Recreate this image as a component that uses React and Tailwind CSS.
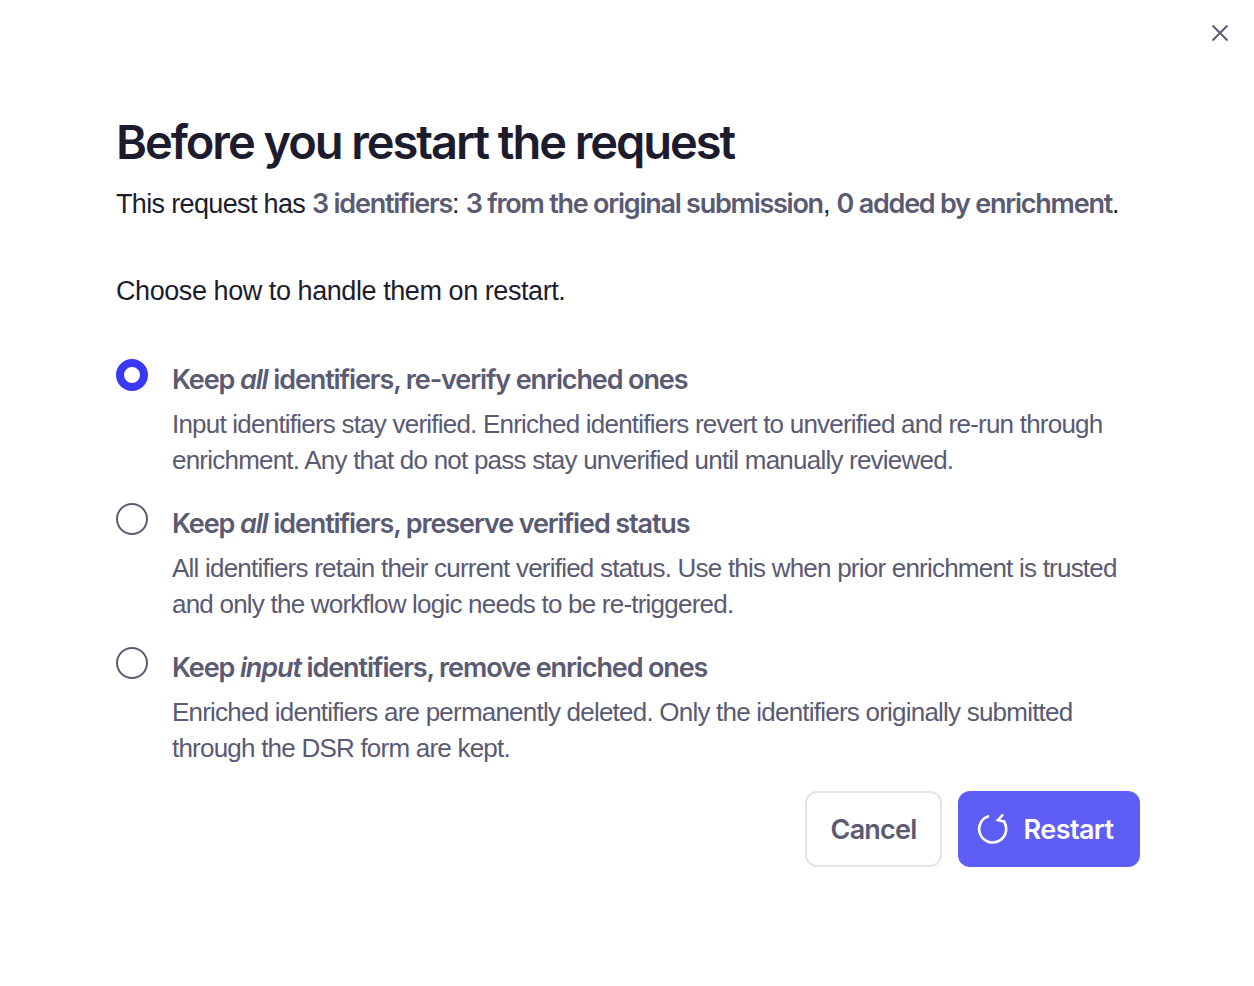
import React, { useState } from 'react'

const options = [
  {
    title: <>Keep <em className="font-semibold">all</em> identifiers, re-verify enriched ones</>,
    lines: ['Input identifiers stay verified. Enriched identifiers revert to unverified and re-run through', 'enrichment. Any that do not pass stay unverified until manually reviewed.'],
  },
  {
    title: <>Keep <em className="font-semibold">all</em> identifiers, preserve verified status</>,
    lines: ['All identifiers retain their current verified status. Use this when prior enrichment is trusted', 'and only the workflow logic needs to be re-triggered.'],
  },
  {
    title: <>Keep <em className="font-semibold">input</em> identifiers, remove enriched ones</>,
    lines: ['Enriched identifiers are permanently deleted. Only the identifiers originally submitted', 'through the DSR form are kept.'],
  },
]

const RadioOption = ({ option, checked, onSelect }) => (
  <div className="flex gap-6 cursor-pointer" onClick={onSelect}>
    <div className={`w-8 h-8 rounded-full shrink-0 ${checked ? 'border-[8px] border-[#3838f5]' : 'border-2 border-[#5a5a72]'}`} />
    <div className="pt-[3px]">
      <p className="font-['Inter',sans-serif] text-[27px] leading-9 font-semibold tracking-[-1.12px] text-[#5a5a72]">{option.title}</p>
      <p className="mt-[8px] text-[26px] leading-9 tracking-[-0.78px] text-[#5a5a72]">
        {option.lines.map(l => <span key={l} className="block whitespace-nowrap">{l}</span>)}
      </p>
    </div>
  </div>
)

export default function App() {
  const [selected, setSelected] = useState(0)

  return (
    <div className="relative h-[986px] bg-white font-['Liberation_Sans',sans-serif] overflow-hidden">
      <button className="absolute top-[23px] right-[24px] text-[#5a5a72]">
        <svg width="20" height="20" viewBox="0 0 20 20" fill="none" stroke="currentColor" strokeWidth="2">
          <path d="M2.5 2.5l15 15M17.5 2.5l-15 15" />
        </svg>
      </button>

      <div className="pl-[116px] pr-[114px] pt-[112px]">
        <h1 className="font-['Inter',sans-serif] text-[47px] leading-[60px] font-semibold tracking-[-2.05px] text-[#1c1c2e] whitespace-nowrap">Before you restart the request</h1>
        <p className="mt-[14px] text-[27px] leading-9 tracking-[-0.65px] text-[#1c1c2e] whitespace-nowrap">
          This request has <span className="font-['Inter',sans-serif] font-semibold tracking-[-1.25px] text-[#5a5a72]">3 identifiers</span>: <span className="font-['Inter',sans-serif] font-semibold tracking-[-1.25px] text-[#5a5a72]">3 from the original submission</span>, <span className="font-['Inter',sans-serif] font-semibold tracking-[-1.25px] text-[#5a5a72]">0 added by enrichment</span>.
        </p>
        <p className="mt-[51px] text-[27px] leading-9 tracking-[-0.43px] text-[#1c1c2e]">Choose how to handle them on restart.</p>

        <div className="mt-[50px] flex flex-col gap-[25px]">
          {options.map((o, i) => (
            <RadioOption key={i} option={o} checked={selected === i} onSelect={() => setSelected(i)} />
          ))}
        </div>

        <div className="mt-[25px] flex justify-end gap-4">
          <button className="h-[76px] w-[137px] rounded-xl border-2 border-[#e4e4ea] bg-white pt-[2px] font-['Inter',sans-serif] text-[27px] font-semibold tracking-[-0.8px] text-[#5a5a72]">Cancel</button>
          <button className="h-[76px] w-[182px] rounded-xl bg-[#5e5ef7] flex items-center justify-center gap-[15px] font-['Inter',sans-serif] text-[27px] font-semibold tracking-[-0.6px] text-white pr-[8px]">
            <svg width="32" height="32" viewBox="0 0 32 32" fill="none" stroke="currentColor" strokeWidth="2.6">
              <path d="M12 3A13.5 13.5 0 1 0 27.5 9.5" />
              <path d="M26 1.5l-5 5.5l7.5 2" />
            </svg>
            <span className="pt-[2px]">Restart</span>
          </button>
        </div>
      </div>
    </div>
  )
}
